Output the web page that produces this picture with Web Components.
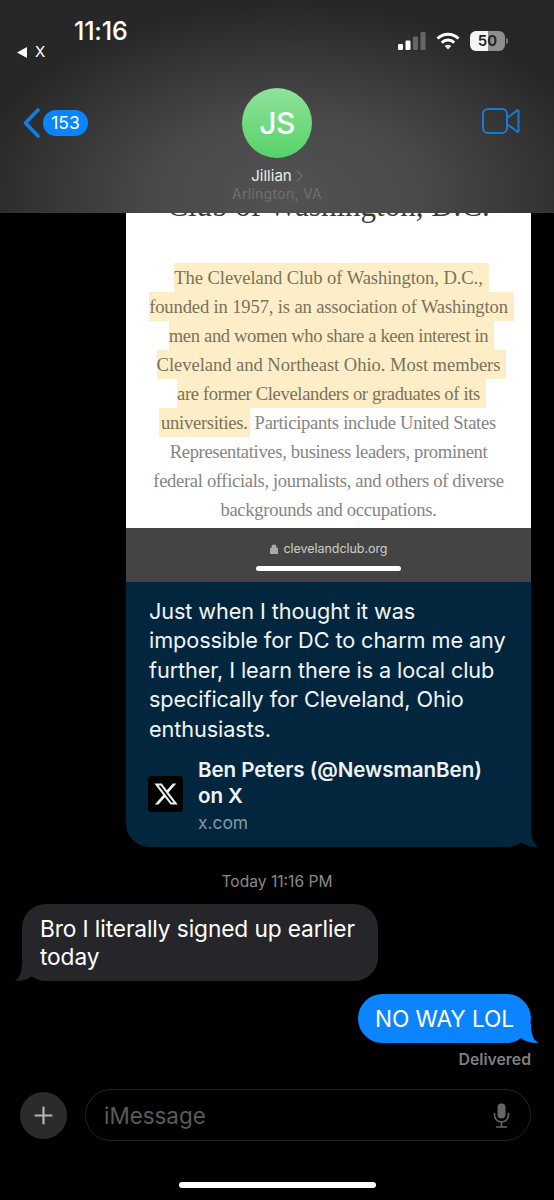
<!DOCTYPE html>
<html>
<head>
<meta charset="utf-8">
<style>
    html,body{margin:0;background:#000;}
    body{width:554px;height:1200px;overflow:hidden;font-family:Inter,"Liberation Sans",sans-serif;color:#fff;}
    chat-thread{height:987px;}
</style>
</head>
<body>
<chat-header></chat-header>
<chat-thread>
    <link-card></link-card>
    <time-stamp>Today 11:16 PM</time-stamp>
    <chat-bubble side="in">Bro I literally signed up earlier<br>today</chat-bubble>
    <chat-bubble side="out">NO WAY LOL</chat-bubble>
    <time-stamp class="delivered">Delivered</time-stamp>
    <message-input></message-input>
    <home-bar></home-bar>
</chat-thread>

<script>
const tailPath='M12 0C12 11 14 17 19.5 19.8 15 20.3 8 19.5 3 16L0 10z';

class ChatHeader extends HTMLElement {
    constructor() {
        super();
        this.attachShadow({mode: 'open'});
        this.shadowRoot.innerHTML=`
        <style>
            :host{display:block;height:213px;box-sizing:border-box;
                background:radial-gradient(ellipse 320px 190px at 290px 195px,#525252 0%,#4a4a4a 40%,#363636 75%,#272727 100%),#262626;}
            .status{display:grid;grid-template-columns:74px 1fr auto;height:88px;box-sizing:border-box;}
            .time{font-size:25px;font-weight:500;letter-spacing:-.2px;line-height:28px;padding-top:17px;}
            .back{font-size:15px;padding:42px 0 0 17px;line-height:20px;display:flex;gap:7px;align-items:center;height:20px;}
            .back svg{display:block;}
            .icons{display:flex;align-items:center;gap:10px;height:20px;margin:31px 46px 0 0;}
            .batt{display:flex;align-items:center;gap:1px;}
            .cell{width:35px;height:20px;border-radius:6px;font-size:15px;font-weight:600;color:#222;text-align:center;line-height:20px;
                background:linear-gradient(90deg,#f4f4f4 0 52%,#8e8e8e 52%);}
            .nub{width:2px;height:6px;background:#777;border-radius:0 2px 2px 0;}
            .nav{display:grid;grid-template-columns:1fr 70px 1fr;}
            .left{display:flex;align-items:center;gap:3px;height:70px;padding:0 0 0 23px;align-self:start;}
            .left svg{display:block;margin-top:-1px;}
            .badge{width:45px;height:26px;border-radius:13px;background:#0a84ff;font-size:17.5px;line-height:26px;text-align:center;margin-top:-1px;}
            .avatar{width:70px;height:70px;border-radius:50%;background:linear-gradient(#8fe39a,#56d268);font-size:30px;font-weight:500;
                display:flex;align-items:center;justify-content:center;letter-spacing:-.5px;}
            .right{display:flex;justify-content:flex-end;padding:20px 34px 0 0;align-self:start;}
            .who{text-align:center;margin-top:9px;}
            .name{font-size:15px;line-height:17px;color:#eee;display:flex;justify-content:center;align-items:center;gap:4px;}
            .place{font-size:14px;line-height:19px;color:#6f6f6f;letter-spacing:.3px;}
        </style>
        <div class="status">
            <div class="back">
                <svg width="11" height="11" viewBox="0 0 11 11"><path d="M0 5.5 10 0v11z" fill="#fff"/></svg>
                <span>X</span>
            </div>
            <div class="time">11:16</div>
            <div class="icons">
                <svg width="28" height="20" viewBox="0 0 28 20">
                    <rect x="0" y="13" width="5" height="6" rx="1.2" fill="#fff"/>
                    <rect x="7.5" y="9.5" width="5" height="9.5" rx="1.2" fill="#fff"/>
                    <rect x="15" y="5.5" width="5" height="13.5" rx="1.2" fill="#666"/>
                    <rect x="22.5" y="1" width="5" height="18" rx="1.2" fill="#666"/>
                </svg>
                <svg width="24" height="18" viewBox="0 0 24 18" fill="none" stroke="#fff" stroke-width="3">
                    <path d="M1.5 6.5a15 15 0 0 1 21 0"/>
                    <path d="M5.8 10.6a9 9 0 0 1 12.4 0"/>
                    <path d="M12 17.5 8.8 14a4.6 4.6 0 0 1 6.4 0z" fill="#fff" stroke="none"/>
                </svg>
                <div class="batt"><div class="cell">50</div><div class="nub"></div></div>
            </div>
        </div>
        <div class="nav">
            <div class="left">
                <svg width="17" height="30" viewBox="0 0 17 30" fill="none" stroke="#0f7fe8" stroke-width="3.6" stroke-linecap="round" stroke-linejoin="round"><path d="M15 2 2.5 15 15 28"/></svg>
                <div class="badge">153</div>
            </div>
            <div class="avatar">JS</div>
            <div class="right">
                <svg width="38" height="26" viewBox="0 0 38 26" fill="none" stroke="#1b7ad6" stroke-width="2" stroke-linejoin="round">
                    <rect x="1" y="1" width="24" height="24" rx="5"/>
                    <path d="M25 10 34.5 3a1 1 0 0 1 2 .6v18.8a1 1 0 0 1-2 .6L25 16z"/>
                </svg>
            </div>
        </div>
        <div class="who">
            <div class="name"><span>Jillian</span>
                <svg width="7" height="12" viewBox="0 0 7 12" fill="none" stroke="#7a7a7a" stroke-width="1"><path d="M1 1l5 5-5 5"/></svg>
            </div>
            <div class="place">Arlington, VA</div>
        </div>`;
    }
}

class ChatThread extends HTMLElement {
    constructor() {
        super();
        this.attachShadow({mode: 'open'});
        this.shadowRoot.innerHTML=`
        <style>
            :host{display:flex;flex-direction:column;overflow:hidden;}
        </style>
        <slot></slot>`;
    }
}

class LinkCard extends HTMLElement {
    constructor() {
        super();
        this.attachShadow({mode: 'open'});
        this.shadowRoot.innerHTML=`
        <style>
            :host{display:block;position:relative;width:405px;margin-left:126px;}
            .shot{background:#fff;height:315px;overflow:hidden;font-family:"Liberation Serif",serif;box-sizing:border-box;}
            .title{height:16px;overflow:hidden;display:flex;align-items:flex-end;justify-content:center;}
            .title span{font-size:31px;line-height:30px;color:#3a3a3a;white-space:nowrap;margin-bottom:8px;}
            .copy{margin-top:34px;text-align:center;font-size:18.6px;line-height:29px;color:#858585;}
            .copy div{height:29px;white-space:nowrap;}
            mark{display:inline-block;background:#feeec8;color:#78735a;padding:0 6px 0 0;margin-right:-6px;}
            .mix mark{padding:0 2px;margin:0 5px 0 -2px;}
            .bar{background:#444;height:54px;box-sizing:border-box;padding-top:12px;}
            .url{display:flex;justify-content:center;align-items:center;gap:6px;font-size:12.5px;line-height:18px;color:#ccc;letter-spacing:-.05px;}
            .pill{width:145px;height:5px;border-radius:3px;background:#fff;margin:8px auto 0;}
            .body{background:#03263f;border-radius:0 0 24px 24px;padding:14.5px 20px 13px 22px;height:265px;box-sizing:border-box;}
            .text{font-size:21.7px;line-height:29.5px;color:#f2f5f7;letter-spacing:-.1px;white-space:nowrap;padding-left:1px;}
            .link{display:flex;align-items:center;gap:15px;margin-top:12.5px;}
            .logo{width:35px;height:36px;border-radius:4px;background:#000;display:flex;align-items:center;justify-content:center;flex:none;margin-top:-4px;}
            .ltitle{font-size:20.6px;font-weight:600;line-height:26px;color:#f0f3f5;white-space:nowrap;letter-spacing:-.1px;}
            .host{font-size:17.4px;line-height:26px;color:#8397a6;margin-top:1px;}
            .tail{position:absolute;right:-8px;bottom:0;display:block;}
        </style>
        <div class="shot">
            <div class="title"><span>Club of Washington, D.C.</span></div>
            <div class="copy">
                <div style="letter-spacing:-.08px"><mark>The Cleveland Club of Washington, D.C.,</mark></div>
                <div style="letter-spacing:-.15px"><mark>founded in 1957, is an association of Washington</mark></div>
                <div style="letter-spacing:-.36px"><mark>men and women who share a keen interest in</mark></div>
                <div style="letter-spacing:-.05px"><mark>Cleveland and Northeast Ohio. Most members</mark></div>
                <div style="letter-spacing:-.35px"><mark>are former Clevelanders or graduates of its</mark></div>
                <div class="mix" style="letter-spacing:-.3px"><mark>universities.</mark>Participants include United States</div>
                <div style="letter-spacing:-.35px">Representatives, business leaders, prominent</div>
                <div style="letter-spacing:-.34px">federal officials, journalists, and others of diverse</div>
                <div style="letter-spacing:-.3px">backgrounds and occupations.</div>
            </div>
        </div>
        <div class="bar">
            <div class="url">
                <svg width="8" height="10" viewBox="0 0 8 10"><path d="M1.5 4V3a2.5 2.5 0 0 1 5 0v1H8v6H0V4z" fill="#aaa"/></svg>
                <span>clevelandclub.org</span>
            </div>
            <div class="pill"></div>
        </div>
        <div class="body">
            <div class="text">Just when I thought it was<br>impossible for DC to charm me any<br>further, I learn there is a local club<br>specifically for Cleveland, Ohio<br>enthusiasts.</div>
            <div class="link">
                <div class="logo">
                    <svg width="26" height="26" viewBox="0 0 24 24"><path fill="#eee" d="M18.244 2.25h3.308l-7.227 8.26 8.502 11.24H16.17l-5.214-6.817L4.99 21.75H1.68l7.73-8.835L1.254 2.25H8.08l4.713 6.231zm-1.161 17.52h1.833L7.084 4.126H5.117z"/></svg>
                </div>
                <div>
                    <div class="ltitle">Ben Peters (@NewsmanBen)<br>on X</div>
                    <div class="host">x.com</div>
                </div>
            </div>
        </div>
        <svg class="tail" width="20" height="20" viewBox="0 0 20 20"><path d="${tailPath}" fill="#03263f"/></svg>`;
    }
}

class TimeStamp extends HTMLElement {
    constructor() {
        super();
        this.attachShadow({mode: 'open'});
        this.shadowRoot.innerHTML=`
        <style>
            :host{display:block;text-align:center;font-size:15.6px;line-height:20px;color:#8a8a8a;margin:25px 0 12px;}
            :host(.delivered){text-align:right;margin:7px 23px 0 0;font-weight:600;color:#7f7f7f;font-size:15.8px;}
        </style>
        <slot></slot>`;
    }
}

class ChatBubble extends HTMLElement {
    constructor() {
        super();
        this.attachShadow({mode: 'open'});
        this.shadowRoot.innerHTML=`
        <style>
            :host{display:block;position:relative;font-size:22.7px;line-height:28px;letter-spacing:-.1px;box-sizing:border-box;}
            :host([side=in]){align-self:flex-start;width:356px;margin-left:22px;background:#26262a;border-radius:24px;padding:11px 18px 10px;}
            :host([side=out]){align-self:flex-end;margin:13px 23px 0 0;background:#0a84ff;border-radius:25px;padding:11px 17px 10px;}
            svg{position:absolute;bottom:0;display:block;}
            :host([side=in]) svg{left:-8px;transform:scaleX(-1);}
            :host([side=out]) svg{right:-8px;}
        </style>
        <slot></slot>
        <svg width="20" height="20" viewBox="0 0 20 20"><path d="${tailPath}" fill="currentColor"/></svg>`;
        this.shadowRoot.querySelector('svg').style.color=this.getAttribute('side')=='in'?'#26262a':'#0a84ff';
    }
}

class MessageInput extends HTMLElement {
    constructor() {
        super();
        this.attachShadow({mode: 'open'});
        this.shadowRoot.innerHTML=`
        <style>
            :host{display:flex;align-items:center;gap:18px;margin:19px 23px 0 20px;}
            .add{width:47px;height:47px;border-radius:50%;background:#2b2b2d;display:flex;align-items:center;justify-content:center;flex:none;}
            .field{flex:1;height:52px;box-sizing:border-box;border:1px solid #232325;border-radius:26px;display:flex;align-items:center;justify-content:space-between;padding:0 20px 0 18px;}
            .hint{font-size:22.4px;color:#5a5a5c;}
        </style>
        <div class="add">
            <svg width="19" height="19" viewBox="0 0 19 19" stroke="#b5b5b5" stroke-width="2.2" stroke-linecap="round"><path d="M9.5 1.5v16M1.5 9.5h16"/></svg>
        </div>
        <div class="field">
            <span class="hint">iMessage</span>
            <svg width="17" height="25" viewBox="0 0 17 25" fill="none" stroke="#666668" stroke-width="1.6" stroke-linecap="round">
                <rect x="4.5" y="0.5" width="8" height="15" rx="4" fill="#666668" stroke="none"/>
                <path d="M1.5 10.5v1.5a7 7 0 0 0 14 0v-1.5M8.5 19v5M3.5 24h10"/>
            </svg>
        </div>`;
    }
}

class HomeBar extends HTMLElement {
    constructor() {
        super();
        this.attachShadow({mode: 'open'});
        this.shadowRoot.innerHTML=`
        <style>
            :host{display:block;width:197px;height:6px;border-radius:3px;background:#fff;margin:41px auto 0;}
        </style>`;
    }
}

customElements.define('chat-header', ChatHeader);
customElements.define('chat-thread', ChatThread);
customElements.define('link-card', LinkCard);
customElements.define('time-stamp', TimeStamp);
customElements.define('chat-bubble', ChatBubble);
customElements.define('message-input', MessageInput);
customElements.define('home-bar', HomeBar);
</script>
</body>
</html>
